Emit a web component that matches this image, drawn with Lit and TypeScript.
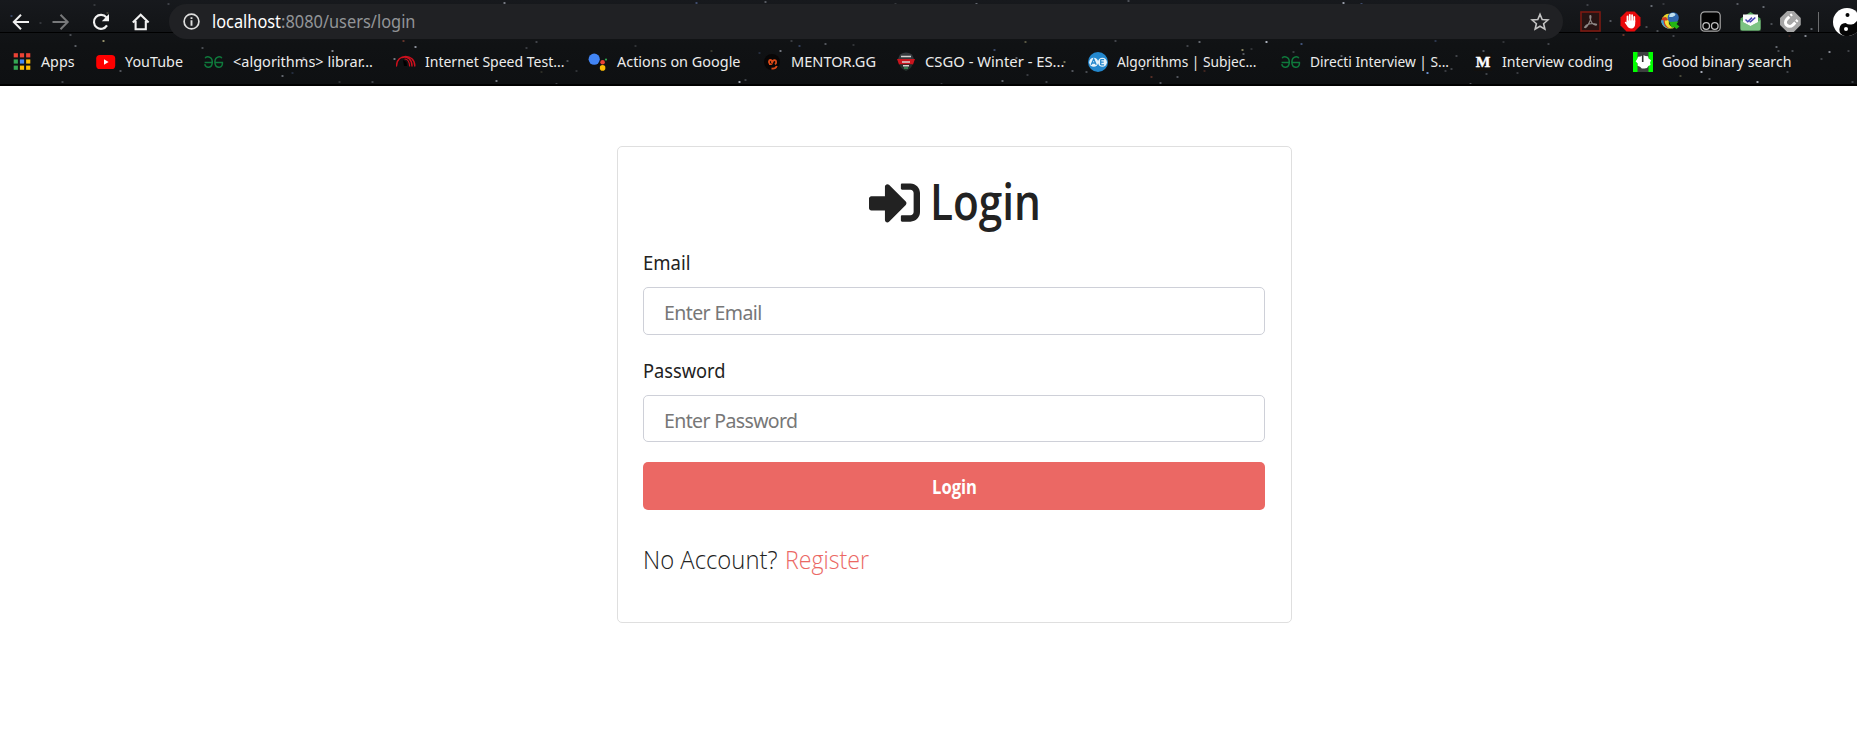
import { LitElement, html, svg, css } from "lit";
import { customElement, property } from "lit/decorators.js";

/** One line of text condensed or stretched to an exact advance width. */
@customElement("fit-text")
class FitText extends LitElement {
  @property() text = "";
  @property({ type: Number }) size = 16;
  @property({ type: Number }) length = 100;
  @property({ type: Number }) box = 0;
  static styles = css`
    :host { display: block; flex: none; }
    svg { display: block; overflow: visible; fill: currentColor; }
  `;
  render() {
    const h = Math.round(this.size * 1.4);
    return html`<svg width=${this.box || this.length} height=${h}>
      <text x="0" y=${this.size * 1.06} font-size=${this.size} textLength=${this.length} lengthAdjust="spacingAndGlyphs">${this.text}</text>
    </svg>`;
  }
}

// x, y, colour, opacity
const B = "#6a86c8", W = "#dfe6f5", Y = "#c8c08a", R = "#a8503c";
const stars: [number, number, string, number][] = [
  [11,15,B,.5],[40,22,W,.2],[70,34,W,.35],[75,45,W,.45],[103,40,Y,.9],[107,12,Y,.3],[94,4,W,.2],[168,3,W,.25],[120,70,W,.4],[62,81,W,.3],
  [202,47,W,.35],[282,75,W,.5],[292,72,B,.3],[332,50,W,.7],[339,81,W,.2],[303,57,W,.5],[372,81,W,.3],[403,40,R,.7],[415,46,W,.75],[394,58,W,.6],
  [504,2,W,.6],[536,41,W,.3],[526,47,W,.25],[567,60,W,.35],[576,70,W,.2],[496,80,W,.6],[541,71,Y,.2],[556,83,W,.3],[739,81,W,.85],[745,79,W,.3],
  [696,2,B,.6],[765,1,W,.4],[711,50,Y,.3],[635,45,W,.2],[799,45,B,.5],[780,50,W,.6],[759,52,B,.3],[825,43,W,.4],[791,40,W,.25],[853,44,W,.2],
  [895,3,W,.2],[976,3,W,.5],[1128,0,W,.35],[1025,41,Y,.5],[994,49,B,.6],[1016,57,W,.5],[1064,61,Y,.7],[1072,70,W,.4],[1086,71,W,.35],[1002,80,W,.5],
  [1046,81,W,.3],[1027,74,W,.25],[941,83,W,.25],[1115,40,W,.3],[1199,41,W,.5],[1187,45,W,.3],[1142,68,W,.95],[1177,76,W,.4],[1160,82,W,.4],[1151,76,R,.6],
  [1204,70,R,.4],[1343,2,W,.8],[1361,3,B,.6],[1524,4,B,.5],[1266,41,W,.95],[1301,43,B,.7],[1242,49,Y,.8],[1243,53,W,.4],[1251,48,W,.2],[1293,51,W,.25],
  [1341,55,W,.5],[1427,72,"#7fb0ff",1],[1451,68,W,.3],[1445,70,W,.25],[1483,50,W,.4],[1548,43,W,.3],[1503,41,W,.2],[1456,55,W,.3],[1517,72,W,.25],[1486,73,W,.3],
  [1470,83,W,.4],[1435,40,B,.4],[1651,5,W,.5],[1663,3,W,.2],[1587,4,W,.25],[1610,20,W,.4],[1646,26,W,.35],[1657,30,W,.35],[1673,55,W,.95],[1701,71,W,.9],
  [1680,75,Y,.4],[1709,78,W,.4],[1757,81,W,.85],[1776,46,W,.5],[1778,50,W,.35],[1805,35,W,.7],[1829,51,W,.7],[1792,50,W,.35],[1848,50,W,.3],[1852,81,W,.3],
  [1787,71,W,.3],[1673,35,W,.3],[1623,34,R,.7],[1737,3,W,.4],[1763,6,W,.5],[1811,28,W,.5],[1771,23,W,.35],[1821,58,W,.3],[1789,35,R,.3],[1596,38,W,.2],
];

const gg = svg`<g fill="none" stroke="#0f7a3c" stroke-width="1.5"><path d="M1.200 6.200C1.900 4.400 8 3.400 8.300 9.900C8.400 16.500 1.300 16.600 .8 12.200M.600 10.500H9M17.800 6.200C17 4.400 11.200 3.400 10.900 9.900C10.800 16.500 18 16.600 18.400 12V10.600H10.500"/></g>`;

const icons: Record<string, unknown> = {
  apps: svg`${["#ea4335","#ea4335","#ea4335","#34a853","#4285f4","#fbbc04","#34a853","#fbbc04","#fbbc04"].map((c, i) => svg`<rect x=${1.7 + (i % 3) * 6.2} y=${1.2 + Math.floor(i / 3) * 6.2} width="4.2" height="4.2" fill=${c}/>`)}`,
  yt: svg`<rect x="0.200" y="3" width="19" height="14" rx="3.6" fill="#f00"/><path d="M8 7.3v5.4l4.6-2.7z" fill="#fff"/>`,
  gg,
  speed: svg`<g fill="none" stroke="#cf101d" stroke-linecap="round"><path d="M.500 14C.500 1.2 18.800 1.2 18.800 14M6 5.5C12 3.5 16 8 16 14" stroke-width="1.4"/><path d="M9 7C12.6 7.4 13.4 10.5 13.6 14" stroke-width="1.2"/></g><path d="M7 8l3.5 2 .5 4H8z" fill="#000"/>`,
  act: svg`<circle cx="6.2" cy="7.2" r="5.6" fill="#4285f4"/><circle cx="14.6" cy="10.2" r="2.3" fill="#ea4335"/><circle cx="14.6" cy="15.9" r="2.8" fill="#fbbc04"/><circle cx="18" cy="7.6" r="1.1" fill="#34a853"/>`,
  mentor: svg`<circle cx="10" cy="10" r="8" fill="#080606"/><path d="M7 12.200H8.200C6 10.500 7 7.800 8.600 8C10.300 8.200 10.200 9.600 10 11.500C10.400 9 11.400 8 12.800 8.200C14.600 8.600 14.600 11 13 12.400M9.500 16.500C12 17 14 16 14.800 14" fill="none" stroke="#dc4a18" stroke-width="1.800"/>`,
  csgo: svg`<path d="M4 2.500Q10-1.500 16 2.500L18 7H2z" fill="#34383c"/><path d="M1 7h18l-2 5.500H3z" fill="#c9151e"/><path d="M3.500 12.500h13Q15 17 10 19 5 17 3.500 12.500z" fill="#26302d"/><path d="M5 4.500h10M6 10h8M7 13.700h6" stroke="#d8d4d2" stroke-width="1.600"/><path d="M8 16h4" stroke="#3c965a" stroke-width="1.500"/>`,
  ae: svg`<circle cx="10" cy="10" r="10" fill="#2387cd"/><circle cx="5.700" cy="10.200" r="4.500" fill="#e6f3fb"/><circle cx="14.400" cy="10.200" r="4.500" fill="#e6f3fb"/><path d="M3.200 12.800L5.700 7l2.500 5.800M4.300 11h3M12.700 7.400v5.500M12.700 7.700h3.400M12.700 10.200h3M12.700 12.800h3.400" fill="none" stroke="#2387cd" stroke-width="1.300"/>`,
  m: svg`<rect x="1" y="1" width="18" height="18" fill="#12100e"/><text x="10" y="15" text-anchor="middle" font-family="Liberation Serif, serif" font-weight="700" font-size="15.500" fill="#fff" stroke="#fff" stroke-width=".4">M</text>`,
  good: svg`<rect width="20" height="20" fill="#0f0"/><path d="M4.500 0h11v20h-11z" fill="#3d403f"/><path d="M10 3l2.500 1 2.500.3.6 2.200 2.400 1.700-.9 2.300.4 2.400-2.100 1.200-1.400 2-2.600.4-2.600-.1-1.800-1.700-2.400-.9.100-2.400L2.600 9.200l1.500-2L5 4.700l2.500-.3z" fill="#fff"/><path d="M9.700 2.500v7.500" stroke="#333" stroke-width="1.600"/>`,
};

// icon, label, width of the label slot, width of the drawn label
const marks: [string, string, number, number][] = [
  ["apps", "Apps", 35.5, 33.5],
  ["yt", "YouTube", 60.5, 58],
  ["gg", "<algorithms> librar...", 143.5, 140],
  ["speed", "Internet Speed Test...", 144.5, 139.5],
  ["act", "Actions on Google", 125.5, 123.5],
  ["mentor", "MENTOR.GG", 86, 85],
  ["csgo", "CSGO - Winter - ES...", 144.5, 139.5],
  ["ae", "Algorithms | Subjec...", 144.5, 139.5],
  ["gg", "Directi Interview | S...", 144.5, 139],
  ["m", "Interview coding", 112, 111],
  ["good", "Good binary search", 131, 129.5],
];

const nav = [
  svg`<path d="M18 10H3M10 2.800L2.800 10l7.200 7.200" fill="none" stroke="#f1f1f1" stroke-width="2"/>`,
  svg`<path d="M1.500 10H16.500M9.500 2.800L16.700 10 9.500 17.200" fill="none" stroke="#77787a" stroke-width="2"/>`,
  svg`<path d="M16 13.400A7 7 0 1 1 15.400 5.400" fill="none" stroke="#f1f1f1" stroke-width="2.100"/><path d="M18 2v7.200h-7.200z" fill="#f1f1f1"/>`,
  svg`<path d="M1.800 10.500L9.700 2.800l7.900 7.700M4.600 9v8.300h10.200V9" fill="none" stroke="#f1f1f1" stroke-width="2.100"/>`,
];

const exts = [
  svg`<rect x="1" y="1" width="19" height="19" fill="#271413" stroke="#7d1a12" stroke-width="1.600"/><path d="M4.600 16.300C6 13 12 11.600 16.500 13.200C17 14.800 14 14 12 11.800C10.300 9.600 9.600 6 10 4.700C11.500 3.500 11 8 9.500 11C7.800 14.500 6 17.500 4.600 16.300z" fill="none" stroke="#8f8987" stroke-width="1.200"/>`,
  svg`<path d="M6.500 .5h8l6 6v8l-6 6h-8l-6-6v-8z" fill="#e8090b"/><path d="M7.500 12V5.500M9.800 10V3.800M12.100 10V4.200M14.300 11V6" stroke="#fff" stroke-width="1.800" stroke-linecap="round"/><path d="M6.600 9.500h8.600v3.200c0 3-1.600 4.800-3.900 4.800-2.200 0-3.300-1-4.300-2.800l-2.300-3.200c.8-1.200 1.900-.5 2.400.6z" fill="#fff"/>`,
  svg`<path d="M11 3A7.500 7.500 0 0 0 1.500 10c0 7 8 9 13 6.700C9 15.500 7.500 11.500 10 8z" fill="#e6d52c"/><path d="M2.500 6.500C0 11 3 16 9.500 17.500C6 14 5.500 10.500 8 8.500L6 6z" fill="#ce3b22"/><path d="M1 9.500C1.500 14 5 17.500 10.500 18C5 17 3.500 13 3.500 9z" fill="#3da0d8"/><path d="M4.800 9.500C4.500 13.500 7 16.500 11 17.300C8 15 7 12.500 8.500 9.500z" fill="#f2e23a"/><circle cx="13.200" cy="6.800" r="5.600" fill="#2f68ae"/><path d="M9.500 3.500c2-2 5-1.800 6 0-.5 1.800-4 3.300-6.500 2.300z" fill="#bfe0ef"/><path d="M9 11l9.500-.5-2 2.500 3 2.500-3 2.500-2.700-2.300-1.800 1.200z" fill="#24b512"/>`,
  svg`<rect x=".8" y=".8" width="19.400" height="19.400" rx="3.800" fill="#030303" stroke="#a7a7a7" stroke-width="1.200"/><g fill="#030303" stroke="#bdbdbd" stroke-width="1.300"><circle cx="6.200" cy="15" r="3.300"/><circle cx="14.800" cy="15" r="3.300"/></g>`,
  svg`<path d="M.500 7.500L10.500 1l10 6.500v12h-20z" fill="#54a35a"/><path d="M3 3.500h15v9l-7.500 2.800L3 12.500z" fill="#fafafa"/><path d="M.500 9l10 6 10-6v8.500q0 2-2 2h-16q-2 0-2-2z" fill="#7cc382"/><path d="M3 4h15v7l-7.500 3.600L3 11z" fill="#fafafa"/><path d="M5.500 8.500l2.300 2.300L12 6.600M9.500 10.300l1 .6 4.800-4.400" fill="none" stroke="#4644b5" stroke-width="1.500"/>`,
  svg`<path d="M7.500 .8h6l6.500 6.500v6.500l-6.500 6.500h-6L.8 13.800V7.300z" fill="#a6a6a6" stroke="#a6a6a6" stroke-linejoin="round" stroke-width="1.500"/><path d="M9.300 5.700L7 8C2.700 12.500 8.500 18 13 13.800l2.300-2.300" fill="none" stroke="#fff" stroke-width="3"/><path d="M12 3.200l-1.500 1.400M17.500 9l-1.400 1.500" stroke="#fff" stroke-width="2.600"/>`,
];

@customElement("app-root")
class AppRoot extends LitElement {
  static styles = css`
    :host { display: block; height: 733px; overflow: hidden; background: #fff; font-family: "Noto Sans", "Open Sans", sans-serif; color: #222; }
    * { box-sizing: border-box; }
    svg { display: block; flex: none; }
    .chrome { position: relative; height: 86px; padding-top: 4px; overflow: hidden; background: linear-gradient(#17191d, #101214 45px, #0e1012); border-bottom: 2px solid #000; }
    .sky { position: absolute; left: 0; top: 0; }
    .toolbar { position: relative; display: flex; align-items: center; height: 35px; padding-left: 11px; }
    .nav { display: flex; gap: 20px; }
    .omni { display: flex; align-items: center; width: 1394px; height: 35px; margin-left: 18px; padding: 0 13px; border-radius: 18px; background: #202124; flex: none; }
    .host { margin-left: 11px; color: #fff; }
    .path { color: #929497; }
    .star { margin-left: auto; }
    .exts { display: flex; gap: 19px; margin-left: 17px; }
    .rule { width: 1px; height: 20px; margin: 0 14px 0 17px; background: #6b6c6e; flex: none; }
    .marks { position: relative; display: flex; align-items: center; height: 45px; padding-left: 12px; gap: 19px; color: #ececec; }
    .mark { display: flex; align-items: center; gap: 9px; flex: none; }
    .card { width: 675px; height: 477px; margin: 60px 0 0 617px; padding: 30px 25px 0; border: 1px solid #dfdfdf; border-radius: 5px; background: #fff; }
    .title { display: flex; align-items: flex-start; height: 72px; margin: 0; padding-left: 225.5px; font-family: "Open Sans", sans-serif; font-weight: 600; }
    .title fit-text { margin: -11px 0 0 10px; }
    .label { height: 38px; }
    .field { display: block; width: 622px; height: 48px; padding: 3px 20px 0; border: 1px solid #ced0d8; border-radius: 5px; outline: none; background: #fff; font: 19.5px "Noto Sans", sans-serif; letter-spacing: -0.58px; }
    .field::placeholder { color: #777; opacity: 1; }
    .second { margin-top: 22px; }
    .pass { height: 47px; letter-spacing: -0.63px; }
    .btn { display: flex; align-items: center; justify-content: center; width: 622px; height: 48px; margin-top: 20px; padding: 2px 0 0; border: 0; border-radius: 5px; background: #eb6864; color: #fff; font: 700 20px "Open Sans", sans-serif; }
    .foot { display: flex; gap: 7px; margin: 32px 0 0; font-family: "Open Sans", sans-serif; font-weight: 300; }
    .link { color: #eb6864; text-decoration: none; }
  `;
  render() {
    return html`
      <header class="chrome">
        <svg class="sky" width="1857" height="84">
          <rect y="32" width="1857" height="1" fill="#000"/>
          ${stars.map(([x, y, c, o]) => svg`<rect x=${x - 0.5} y=${y} width="2" height="2" rx=".6" fill=${c} opacity=${o * 0.8}/>`)}
        </svg>
        <div class="toolbar">
          <nav class="nav">${nav.map((n) => html`<svg width="20" height="20">${n}</svg>`)}</nav>
          <div class="omni">
            <svg width="19" height="19"><circle cx="9.500" cy="9.500" r="7.400" fill="none" stroke="#dedede" stroke-width="1.700"/><path d="M9.500 8.300v5.400M9.500 5.200v1.900" stroke="#dedede" stroke-width="1.900"/></svg>
            <fit-text class="host" text="localhost" size="17.5" length="69"></fit-text>
            <fit-text class="path" text=":8080/users/login" size="17.5" length="134.5"></fit-text>
            <svg class="star" width="20" height="20"><path d="M10 2.300l2.200 5.200 5.700.5-4.300 3.700 1.300 5.500-4.900-2.900-4.900 2.900 1.300-5.500L2.100 8l5.700-.5z" fill="none" stroke="#c4c4c4" stroke-width="1.600"/></svg>
          </div>
          <div class="exts">${exts.map((e) => html`<svg width="21" height="21">${e}</svg>`)}</div>
          <div class="rule"></div>
          <svg width="28" height="28"><circle cx="14" cy="14" r="14" fill="#fff"/><path d="M22 2.500A14 14 0 0 1 11 27.700A6.500 6.500 0 0 1 12.500 15A6.800 6.800 0 0 0 22 2.500z" fill="#050505"/><circle cx="14.500" cy="7" r="2" fill="#050505"/><circle cx="13" cy="21" r="2" fill="#fff"/></svg>
        </div>
        <div class="marks">
          ${marks.map(([i, t, w, l]) => html`<div class="mark"><svg width="20" height="20">${icons[i]}</svg><fit-text .text=${t} .size=${15} .box=${w} .length=${l}></fit-text></div>`)}
        </div>
      </header>
      <main class="card">
        <h1 class="title">
          <svg width="51" height="51" viewBox="0 0 512 512" fill="#222"><path d="M416 448h-84c-6.600 0-12-5.400-12-12v-40c0-6.600 5.400-12 12-12h84c17.700 0 32-14.300 32-32V160c0-17.700-14.300-32-32-32h-84c-6.600 0-12-5.400-12-12V76c0-6.600 5.400-12 12-12h84c53 0 96 43 96 96v192c0 53-43 96-96 96zm-47-201L201 79c-15-15-41-4.500-41 17v96H24c-13.300 0-24 10.700-24 24v96c0 13.300 10.700 24 24 24h136v96c0 21.500 26 32 41 17l168-168c9.300-9.400 9.300-24.600 0-34z"/></svg>
          <fit-text text="Login" size="51" length="111"></fit-text>
        </h1>
        <div class="label"><fit-text text="Email" size="19.5" length="47.5"></fit-text></div>
        <input class="field" placeholder="Enter Email">
        <div class="label second"><fit-text text="Password" size="19.5" length="82.5"></fit-text></div>
        <input class="field pass" type="password" placeholder="Enter Password">
        <button class="btn"><fit-text text="Login" size="20" length="45"></fit-text></button>
        <p class="foot">
          <fit-text text="No Account?" size="25.5" length="134.5"></fit-text>
          <a class="link"><fit-text text="Register" size="25.5" length="84"></fit-text></a>
        </p>
      </main>`;
  }
}
